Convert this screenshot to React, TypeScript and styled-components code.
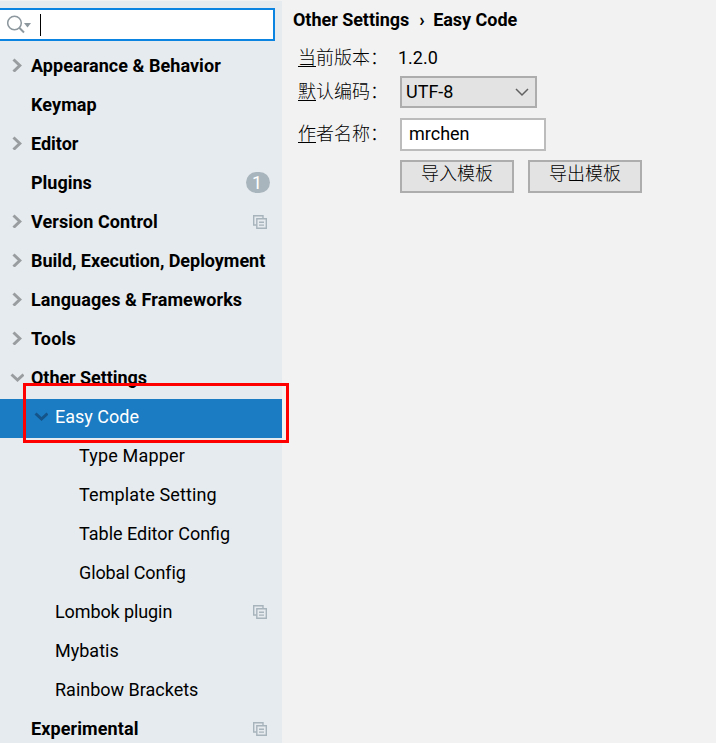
import React from 'react';
import styled, { createGlobalStyle } from 'styled-components';

const GlobalStyle = createGlobalStyle`
  * { box-sizing: border-box; }
  body {
    margin: 0;
    background: #f2f2f2;
    color: #000;
    font: 18px/22px Roboto, "Noto Sans CJK SC", sans-serif;
    overflow: hidden;
  }
`;

const Window = styled.div`
  display: flex;
  width: 716px;
  height: 743px;
  overflow: hidden;
  border-top: 1px solid #f2f2f2;
`;

const Sidebar = styled.aside`
  width: 282px;
  flex: none;
  background: #e6ebef;
`;

const SearchField = styled.div`
  display: flex;
  align-items: center;
  width: 275px;
  height: 33px;
  margin: 7px 0;
  padding-left: 7px;
  border: 2px solid #0a84e0;
  border-left: 0;
  background: #fff;
`;

const Caret = styled.span`
  width: 1px;
  height: 22px;
  margin-left: 9px;
  background: #000;
`;

const TreeRow = styled.div<{ $level: number; $selected?: boolean }>`
  position: relative;
  display: flex;
  align-items: center;
  height: 39px;
  padding-left: ${({ $level }) => 10 + $level * 24}px;
  padding-right: 12px;
  padding-bottom: 3px;
  white-space: nowrap;
  font-weight: ${({ $level }) => ($level === 0 ? 700 : 400)};
  color: ${({ $selected }) => ($selected ? '#fff' : '#000')};
  background: ${({ $selected }) => ($selected ? '#1b7cc3' : 'transparent')};
`;

const ArrowSlot = styled.span`
  display: flex;
  width: 21px;
  flex: none;
  padding-bottom: 2px;
`;

const RowLabel = styled.span<{ $spacing: number }>`
  flex: 1;
  letter-spacing: ${({ $spacing }) => $spacing}px;
`;

const Badge = styled.span`
  display: flex;
  align-items: center;
  justify-content: center;
  width: 24px;
  height: 21px;
  margin-bottom: 1px;
  border-radius: 11px;
  background: #a9b5bc;
  color: #fff;
  font-weight: 400;
  padding-right: 2px;
`;

const SharedSlot = styled.span`
  display: flex;
  margin: 0 3px 1px 0;
`;

const Highlight = styled.div`
  position: absolute;
  z-index: 1;
  left: 23px;
  top: -16px;
  width: 266px;
  height: 60px;
  border: 3px solid #fe0000;
`;

const Content = styled.main`
  flex: 1;
  padding-left: 11px;
`;

const Breadcrumb = styled.h1`
  display: flex;
  margin: 8px 0 14px;
  font-size: 18px;
  line-height: 22px;
  font-weight: 700;
  letter-spacing: -0.04px;
`;

const Separator = styled.span`
  width: 24px;
  padding-left: 10px;
`;

const Form = styled.div`
  display: grid;
  grid-template-columns: 102px auto;
  grid-template-rows: 31px 42px 42px 33px;
  justify-content: start;
  padding-left: 5px;
`;

const FieldLabel = styled.label<{ $drop: number }>`
  font-family: "Noto Sans CJK SC", sans-serif;
  font-weight: 300;
  line-height: 22px;
  padding-top: ${({ $drop }) => $drop}px;
`;

const Mnemonic = styled.span`
  text-decoration: underline;
  text-decoration-thickness: 1px;
  text-underline-offset: 2px;
`;

const Version = styled.span`
  margin-left: -2px;
  padding-top: 2px;
`;

const Select = styled.div`
  display: flex;
  align-items: center;
  justify-content: space-between;
  width: 137px;
  height: 32px;
  padding: 0 6px 0 4px;
  border: 2px solid #adadad;
  background: #e3e3e3;
`;

const TextField = styled.div`
  width: 146px;
  height: 33px;
  padding: 3px 7px;
  border: 2px solid #bcbcbc;
  background: #fff;
`;

const Buttons = styled.div`
  display: flex;
  gap: 14px;
`;

const Button = styled.button`
  width: 114px;
  height: 33px;
  padding: 0 0 9px;
  border: 2px solid #adadad;
  background: #e3e3e3;
  color: #000;
  font: 300 18px/20px "Noto Sans CJK SC", sans-serif;
`;

const SearchIcon = () => (
  <svg width="24" height="20" viewBox="0 0 24 20" fill="none">
    <circle cx="7.5" cy="8" r="6.8" stroke="#8c979e" strokeWidth="1.5" />
    <path d="M12 12.5 17 17.5" stroke="#8c979e" strokeWidth="2" />
    <path d="M17 8h7l-3.5 4.5z" fill="#8c979e" />
  </svg>
);

const Arrow = ({ open, dark }: { open: boolean; dark?: boolean }) => (
  <svg width="14" height="14" viewBox="0 0 14 14" fill="none">
    <path
      d={open ? 'M1.5 4.5 7.5 10 13.5 4.5' : 'M3.5 1.5 9.8 7.5 3.5 13.5'}
      stroke={dark ? '#145488' : '#9a9d9f'}
      strokeWidth="3"
    />
  </svg>
);

const SharedIcon = () => (
  <svg width="14" height="14" viewBox="0 0 14 14" fill="none" stroke="#a8b4bc" strokeWidth="1.4">
    <path d="M3.5 10H.7V.7H10v2.8" />
    <path d="M3.8 3.8h9.5v9.5H3.8zM6 7.2h5M6 10.1h5" />
  </svg>
);

const SelectArrow = () => (
  <svg width="14" height="10" viewBox="0 0 14 10" fill="none">
    <path d="m1 2 6 6 6-6" stroke="#616161" strokeWidth="1.5" />
  </svg>
);

type Item = {
  label: string;
  level: number;
  arrow?: 'open' | 'closed';
  selected?: boolean;
  badge?: string;
  shared?: boolean;
  spacing?: number;
};

const items: Item[] = [
  { label: 'Appearance & Behavior', level: 0, arrow: 'closed', spacing: 0.05 },
  { label: 'Keymap', level: 0, spacing: 0.1 },
  { label: 'Editor', level: 0, arrow: 'closed' },
  { label: 'Plugins', level: 0, badge: '1' },
  { label: 'Version Control', level: 0, arrow: 'closed', shared: true, spacing: 0.07 },
  { label: 'Build, Execution, Deployment', level: 0, arrow: 'closed', spacing: -0.04 },
  { label: 'Languages & Frameworks', level: 0, arrow: 'closed', spacing: 0.09 },
  { label: 'Tools', level: 0, arrow: 'closed', spacing: 0.2 },
  { label: 'Other Settings', level: 0, arrow: 'open', spacing: -0.06 },
  { label: 'Easy Code', level: 1, arrow: 'open', selected: true },
  { label: 'Type Mapper', level: 2, spacing: 0.17 },
  { label: 'Template Setting', level: 2, spacing: 0.12 },
  { label: 'Table Editor Config', level: 2 },
  { label: 'Global Config', level: 2, spacing: -0.13 },
  { label: 'Lombok plugin', level: 1, shared: true, spacing: -0.1 },
  { label: 'Mybatis', level: 1 },
  { label: 'Rainbow Brackets', level: 1 },
  { label: 'Experimental', level: 0, shared: true, spacing: 0.1 },
];

export default function App() {
  return (
    <Window>
      <GlobalStyle />
      <Sidebar>
        <SearchField>
          <SearchIcon />
          <Caret />
        </SearchField>
        {items.map((item) => (
          <TreeRow key={item.label} $level={item.level} $selected={item.selected}>
            <ArrowSlot>
              {item.arrow && <Arrow open={item.arrow === 'open'} dark={item.selected} />}
            </ArrowSlot>
            <RowLabel $spacing={item.spacing ?? 0}>{item.label}</RowLabel>
            {item.badge && <Badge>{item.badge}</Badge>}
            {item.shared && <SharedSlot><SharedIcon /></SharedSlot>}
            {item.selected && <Highlight />}
          </TreeRow>
        ))}
      </Sidebar>
      <Content>
        <Breadcrumb>
          <span>Other Settings</span>
          <Separator>›</Separator>
          <span>Easy Code</span>
        </Breadcrumb>
        <Form>
          <FieldLabel $drop={0}><Mnemonic>当</Mnemonic>前版本：</FieldLabel>
          <Version>1.2.0</Version>
          <FieldLabel $drop={3}><Mnemonic>默</Mnemonic>认编码：</FieldLabel>
          <Select>UTF-8<SelectArrow /></Select>
          <FieldLabel $drop={3}><Mnemonic>作</Mnemonic>者名称：</FieldLabel>
          <TextField>mrchen</TextField>
          <span />
          <Buttons>
            <Button>导入模板</Button>
            <Button>导出模板</Button>
          </Buttons>
        </Form>
      </Content>
    </Window>
  );
}
